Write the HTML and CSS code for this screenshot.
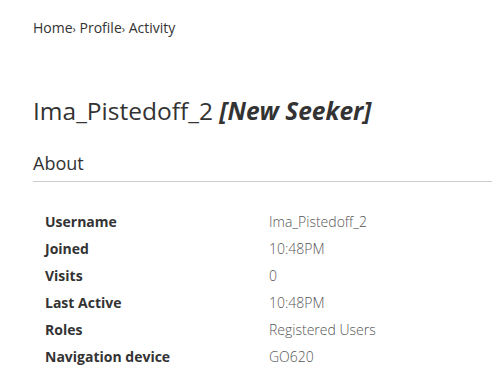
FILE: index.html
```html
<!DOCTYPE html>
<html>
<head>
<link rel="stylesheet" href="styles.css">
</head>
<body>
<div class="page">
  <nav class="breadcrumb">
    <a href="#">Home</a><span class="sep">›</span>
    <a href="#">Profile</a><span class="sep">›</span>
    <span>Activity</span>
  </nav>

  <h1 class="title">Ima_Pistedoff_2 <em>[New Seeker]</em></h1>

  <h2 class="section-title">About</h2>

  <dl class="about">
    <dt>Username</dt><dd>Ima_Pistedoff_2</dd>
    <dt>Joined</dt><dd>10:48PM</dd>
    <dt>Visits</dt><dd>0</dd>
    <dt>Last Active</dt><dd>10:48PM</dd>
    <dt>Roles</dt><dd>Registered Users</dd>
    <dt>Navigation device</dt><dd>GO620</dd>
  </dl>
</div>
</body>
</html>
```

FILE: styles.css
```css
* {
  box-sizing: border-box;
}

body {
  font-family: "Open Sans", "DejaVu Sans", sans-serif;
  color: #333;
  margin: 0;
  overflow: hidden;
}

.page {
  padding: 18px 0 0 33px;
}

.breadcrumb {
  font-size: 14px;
  line-height: 20px;
}

.breadcrumb a {
  color: #333;
  text-decoration: none;
}

.breadcrumb .sep {
  font-size: 11px;
}

.title {
  font-size: 24.5px;
  font-weight: 400;
  line-height: 32px;
  margin: 56px 0 0;
}

.title em {
  font-weight: 700;
}

.section-title {
  font-size: 18px;
  font-weight: 400;
  line-height: 24px;
  margin: 24px 0 0;
  padding-bottom: 6px;
  border-bottom: 1px solid #ccc;
}

.about {
  display: grid;
  grid-template-columns: 224px 1fr;
  margin: 26px 0 0 12px;
  font-size: 14px;
  line-height: 27px;
}

.about dt {
  font-weight: 700;
}

.about dd {
  margin: 0;
  font-weight: 300;
  color: #555;
}
```
